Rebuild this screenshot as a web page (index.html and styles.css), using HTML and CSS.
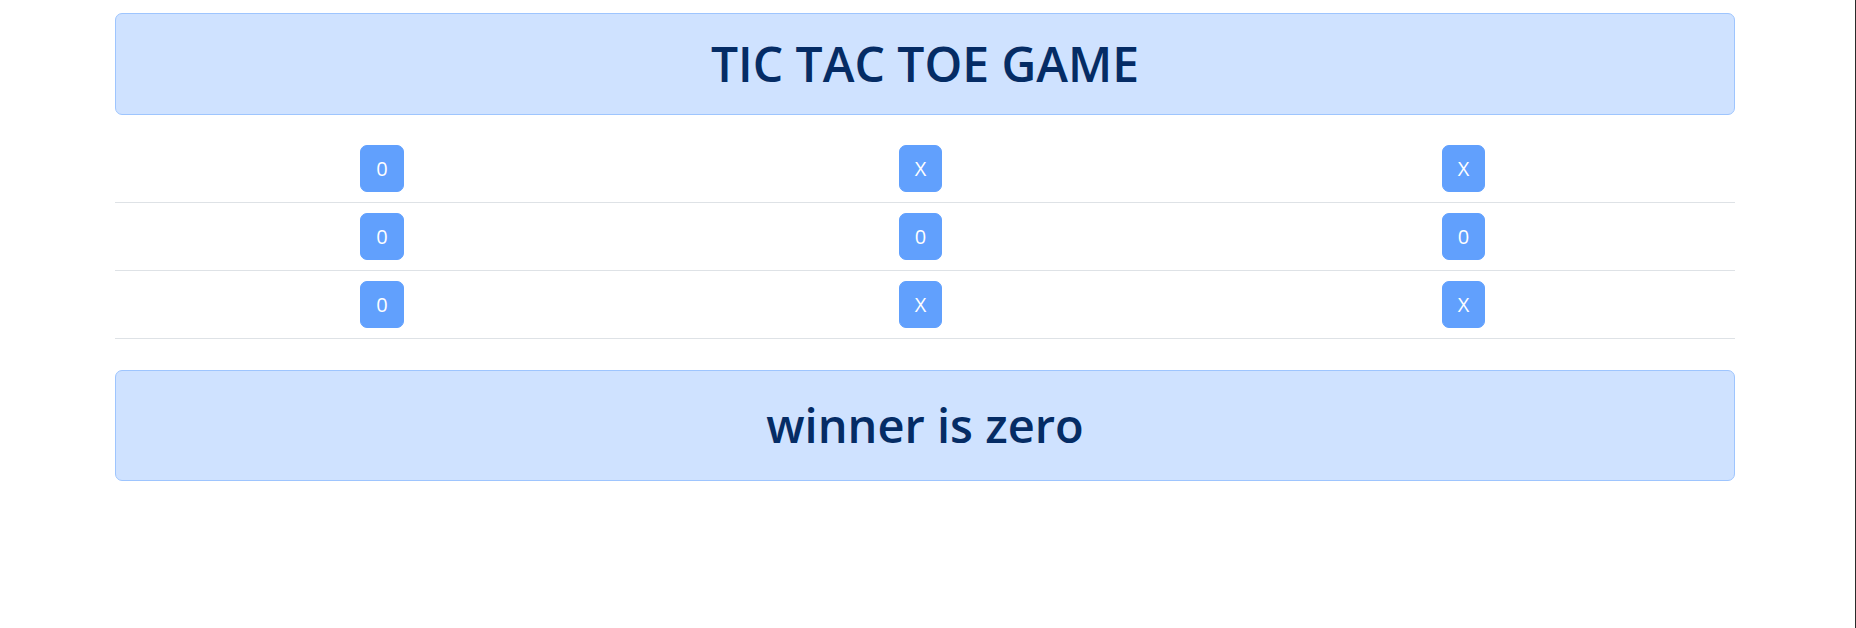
FILE: index.html
```html
<!DOCTYPE HTML>
<html>
  <head>
  <meta charset="UTF-8">
  <title>Tic Tac Toe</title>
  <link rel="stylesheet" href="styles.css">
  </head>

  <body>
    <div class="container">
      <div class="alert">
        <h1>TIC TAC TOE GAME</h1>
      </div>

      <table class="board">
        <tr>
          <td><button disabled>0</button></td>
          <td><button disabled>X</button></td>
          <td><button disabled>X</button></td>
        </tr>
        <tr>
          <td><button disabled>0</button></td>
          <td><button disabled>0</button></td>
          <td><button disabled>0</button></td>
        </tr>
        <tr>
          <td><button disabled>0</button></td>
          <td><button disabled>X</button></td>
          <td><button disabled>X</button></td>
        </tr>
      </table>

      <div class="alert result">
        <h1>winner is zero</h1>
      </div>
    </div>
  </body>
</html>
```

FILE: styles.css
```css
html {
  height: 100%;
  box-sizing: border-box;
  border-right: 1px solid #2b2b2b;
}
body {
  margin: 0;
  font-family: "Open Sans", "Noto Sans", sans-serif;
  color: #212529;
}
.container {
  width: 1620px;
  margin-left: 115px;
  padding-top: 13px;
}
.alert {
  background-color: #cfe2ff;
  border: 1px solid #9ec5fe;
  border-radius: 7px;
  padding: 20px;
  color: #052c65;
  text-align: center;
}
.alert h1 {
  margin: 0;
  font-size: 48px;
  font-weight: 600;
  line-height: 60px;
}
.result { margin-top: 31px; padding-top: 21px; padding-bottom: 21px; }
.result h1 { font-size: 47px; line-height: 67px; }

.board {
  width: 100%;
  margin-top: 20px;
  border-collapse: collapse;
}
.board td {
  padding: 10px;
  text-align: center;
  border-bottom: 1px solid #dee2e6;
}
.board td:first-child { width: 514px; }
.board button {
  font-family: inherit;
  font-size: 20px;
  line-height: 30px;
  padding: 7.5px 15px;
  color: #fff;
  background-color: #0d6efd;
  border: 1px solid #0d6efd;
  border-radius: 7px;
  opacity: .65;
  vertical-align: middle;
}
```
